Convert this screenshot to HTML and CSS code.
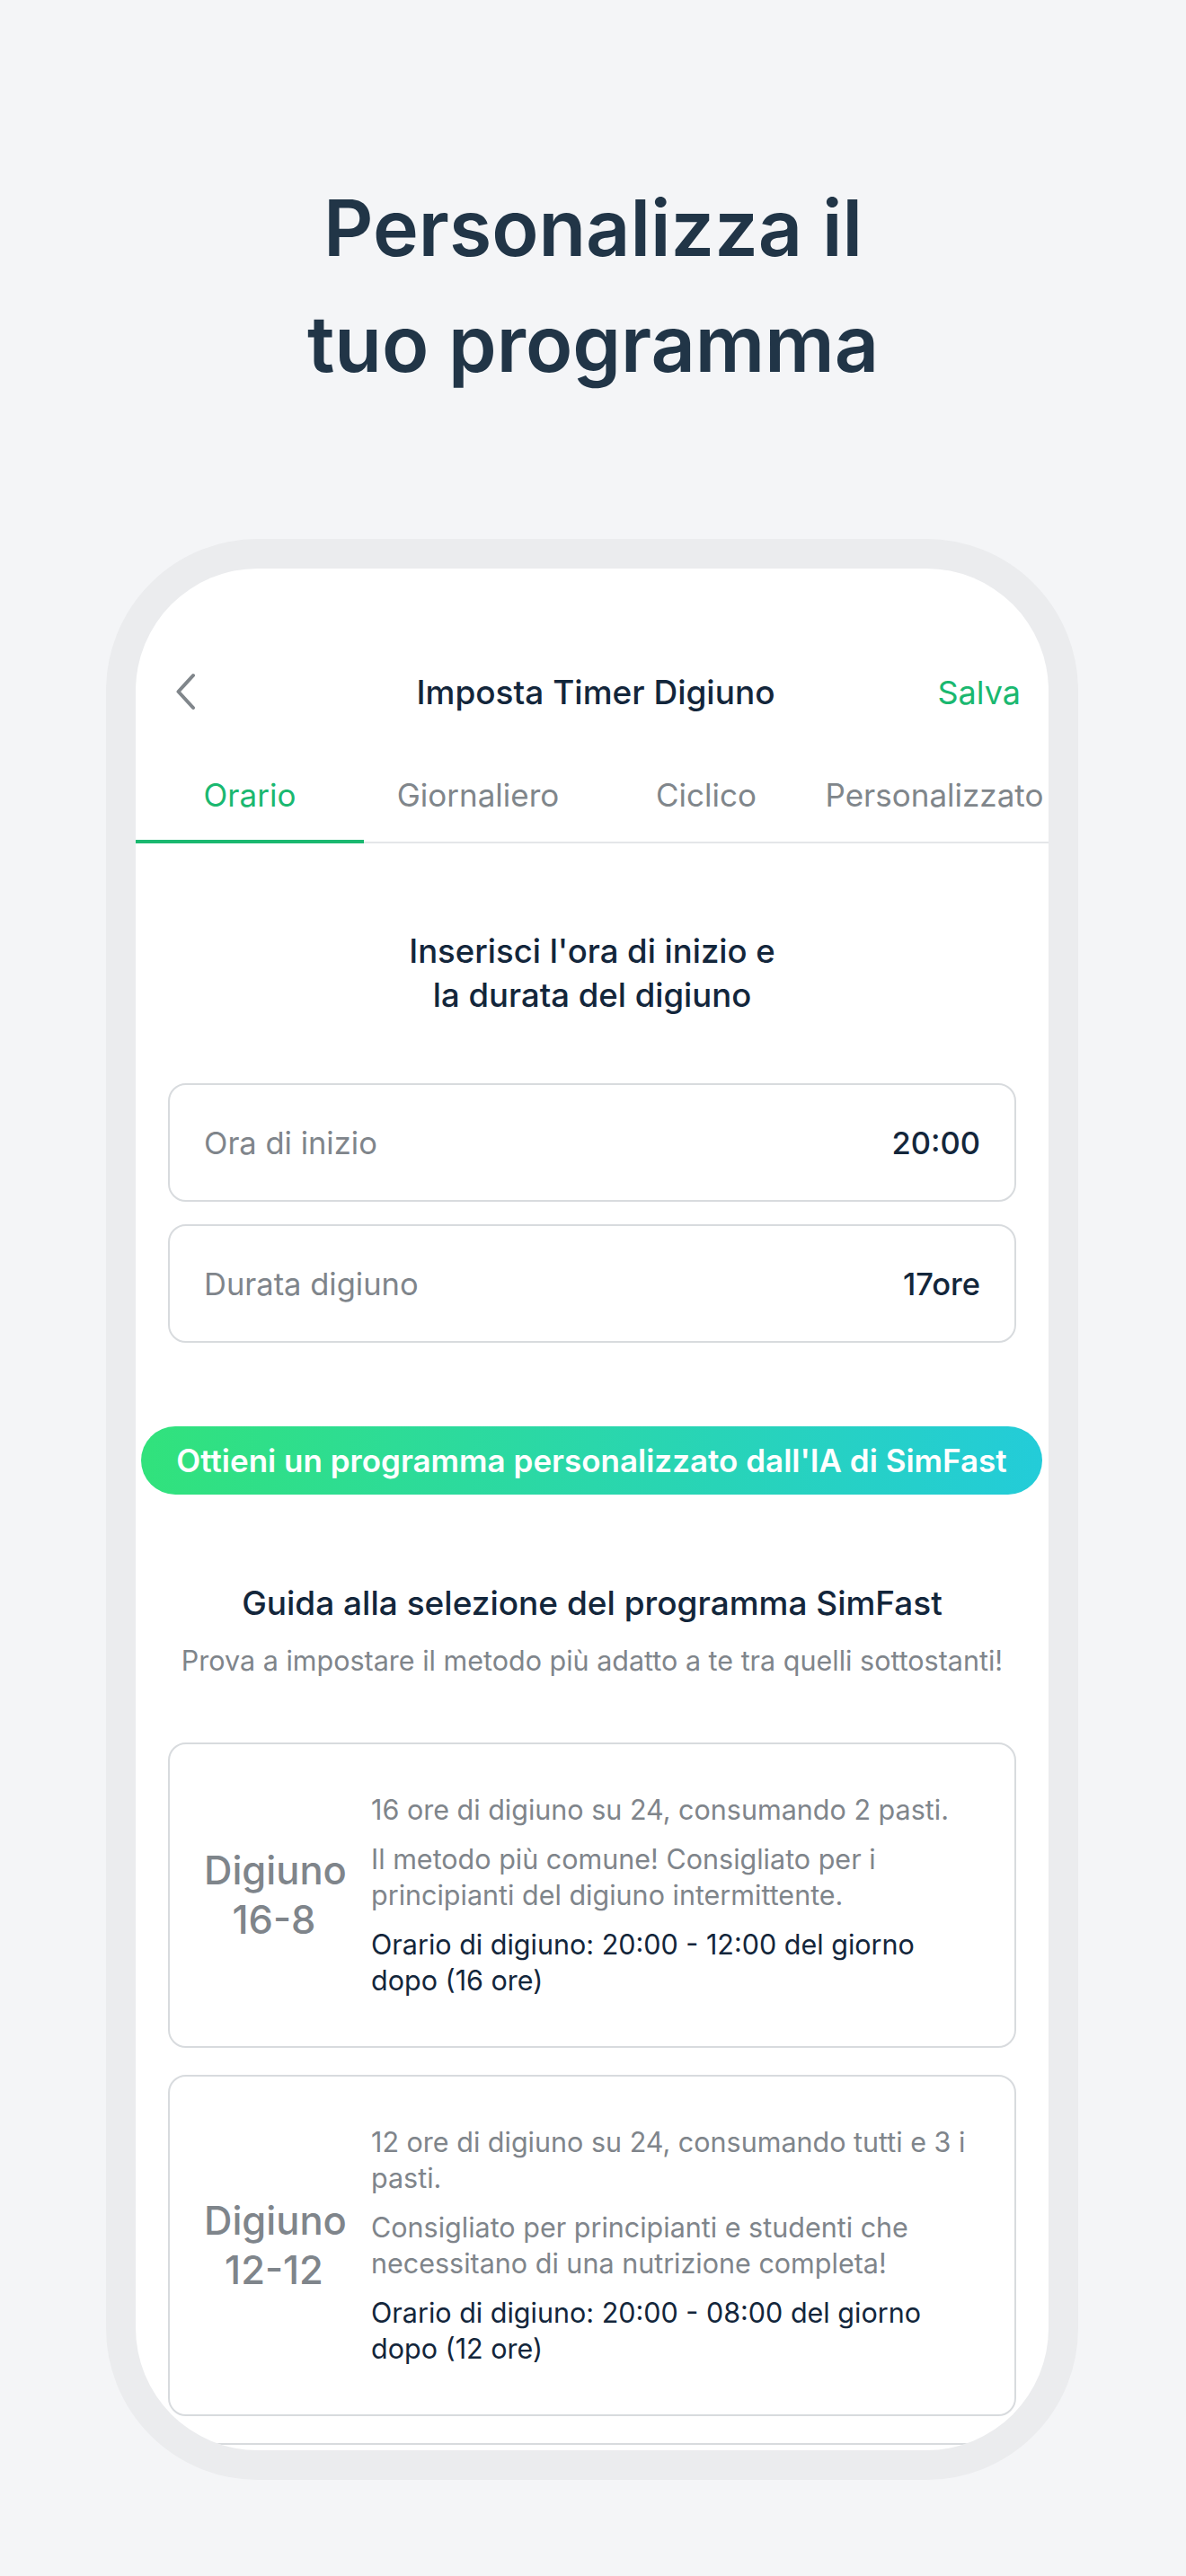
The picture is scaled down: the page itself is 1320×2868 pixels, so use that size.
FILE: index.html
```html
<!DOCTYPE html>
<html lang="it">
<head>
  <meta charset="UTF-8" />
  <meta name="viewport" content="width=device-width, initial-scale=1.0"/>
  <title>Personalizza il tuo programma</title>
  <link rel="stylesheet" href="styles.css">
</head>
<body>

  <h1 class="headline">Personalizza il<br>tuo programma</h1>

  <div class="phone">
    <div class="screen">

      <div class="nav">
        <svg class="back" width="30" height="44" viewBox="0 0 30 44">
          <path d="M25 3 L8.5 21 L25 39" fill="none" stroke="#80868b" stroke-width="4" stroke-linecap="round" stroke-linejoin="round"/>
        </svg>
        <div class="nav-title">Imposta Timer Digiuno</div>
        <div class="nav-save">Salva</div>
      </div>

      <div class="tabs">
        <div class="tab active">Orario</div>
        <div class="tab">Giornaliero</div>
        <div class="tab">Ciclico</div>
        <div class="tab">Personalizzato</div>
      </div>

      <h2 class="intro">Inserisci l'ora di inizio e<br>la durata del digiuno</h2>

      <div class="fields">
        <div class="field">
          <span class="field-label">Ora di inizio</span>
          <span class="field-value">20:00</span>
        </div>
        <div class="field">
          <span class="field-label">Durata digiuno</span>
          <span class="field-value">17ore</span>
        </div>
      </div>

      <button class="ai-btn">Ottieni un programma personalizzato dall'IA di SimFast</button>

      <div class="guide">
        <h3>Guida alla selezione del programma SimFast</h3>
        <p>Prova a impostare il metodo più adatto a te tra quelli sottostanti!</p>
      </div>

      <div class="plans">
        <div class="plan">
          <div class="plan-name">Digiuno<br>16-8</div>
          <div class="plan-text">
            <p>16 ore di digiuno su 24, consumando 2 pasti.</p>
            <p>Il metodo più comune! Consigliato per i principianti del digiuno intermittente.</p>
            <p class="plan-time">Orario di digiuno: 20:00 - 12:00 del giorno dopo (16 ore)</p>
          </div>
        </div>
        <div class="plan">
          <div class="plan-name">Digiuno<br>12-12</div>
          <div class="plan-text">
            <p>12 ore di digiuno su 24, consumando tutti e 3 i pasti.</p>
            <p>Consigliato per principianti e studenti che necessitano di una nutrizione completa!</p>
            <p class="plan-time">Orario di digiuno: 20:00 - 08:00 del giorno dopo (12 ore)</p>
          </div>
        </div>
        <!-- next card, only its top edge shows -->
        <div class="plan plan-peek"></div>
      </div>

    </div>
  </div>

</body>
</html>
```

FILE: styles.css
```css
body {
  margin: 0;
  background: #f4f5f7;
  font-family: Inter, "Noto Sans", Arial, sans-serif;
  color: #13263b;
}

.headline {
  margin: 0;
  padding-top: 190px;
  text-align: center;
  font-size: 86px;
  line-height: 129px;
  font-weight: 600;
  color: #213547;
}

/* phone frame */
.phone {
  width: 1016px;
  margin: 152px 0 0 118px;
  border: 33px solid #ebecee;
  border-radius: 169px;
  background: #ebecee;
}

.screen {
  height: 2095px;
  padding-top: 116px;
  box-sizing: border-box;
  background: #fff;
  border-radius: 136px;
  overflow: hidden;
}

.nav {
  display: grid;
  grid-template-columns: 1fr auto 1fr;
  align-items: center;
  height: 44px;
  padding: 0 31px 0 39px;
}

.back {
  display: block;
}

.nav-title {
  font-size: 37px;
  line-height: 44px;
  font-weight: 500;
}

.nav-save {
  justify-self: end;
  font-size: 36px;
  line-height: 44px;
  color: #1ab870;
}

.tabs {
  display: grid;
  grid-template-columns: repeat(4, 1fr);
  margin-top: 71px;
  box-shadow: inset 0 -2px 0 #e4e6e9;
}

.tab {
  text-align: center;
  font-size: 35px;
  line-height: 42px;
  color: #80868b;
  padding-bottom: 29px;
  border-bottom: 4px solid transparent;
  white-space: nowrap;
}

.tab.active {
  color: #1ab870;
  border-bottom-color: #1ab870;
}

.intro {
  margin: 96px 0 0;
  text-align: center;
  font-size: 36.5px;
  line-height: 49px;
  font-weight: 500;
}

.fields {
  display: flex;
  flex-direction: column;
  gap: 25px;
  margin: 73px 36px 0;
}

.field {
  display: flex;
  align-items: center;
  justify-content: space-between;
  height: 132px;
  box-sizing: border-box;
  padding: 0 38px;
  border: 2px solid #d8dbde;
  border-radius: 20px;
}

.field-label {
  font-size: 34.5px;
  color: #7f858b;
}

.field-value {
  font-size: 34.5px;
  font-weight: 500;
}

.ai-btn {
  display: block;
  width: calc(100% - 13px);
  height: 76px;
  margin: 93px 0 0 6px;
  border: none;
  border-radius: 38px;
  background: linear-gradient(to right, #31e27c, #23ccd9);
  color: #fff;
  font-family: inherit;
  font-size: 35px;
  font-weight: 600;
  white-space: nowrap;
}

.guide {
  margin-top: 99px;
  text-align: center;
}

.guide h3 {
  margin: 0;
  font-size: 37px;
  line-height: 44px;
  font-weight: 500;
}

.guide p {
  margin: 22px 0 0;
  font-size: 30.5px;
  line-height: 40px;
  color: #7f858b;
}

.plans {
  display: flex;
  flex-direction: column;
  gap: 30px;
  margin: 71px 36px 0;
}

.plan {
  display: flex;
  align-items: center;
  gap: 30px;
  padding: 53px 38px;
  border: 2px solid #d8dbde;
  border-radius: 20px;
}

.plan-peek {
  height: 240px;
}

.plan-name {
  flex: none;
  width: 156px;
  text-align: center;
  font-size: 43.5px;
  line-height: 55px;
  font-weight: 500;
  color: #7f858b;
}

.plan-text {
  flex: 1;
}

.plan-text p {
  margin: 0 0 15px;
  font-size: 30.5px;
  line-height: 40px;
  color: #7f858b;
}

.plan-text p:last-child {
  margin-bottom: 0;
}

.plan-text .plan-time {
  color: #13263b;
}
```
